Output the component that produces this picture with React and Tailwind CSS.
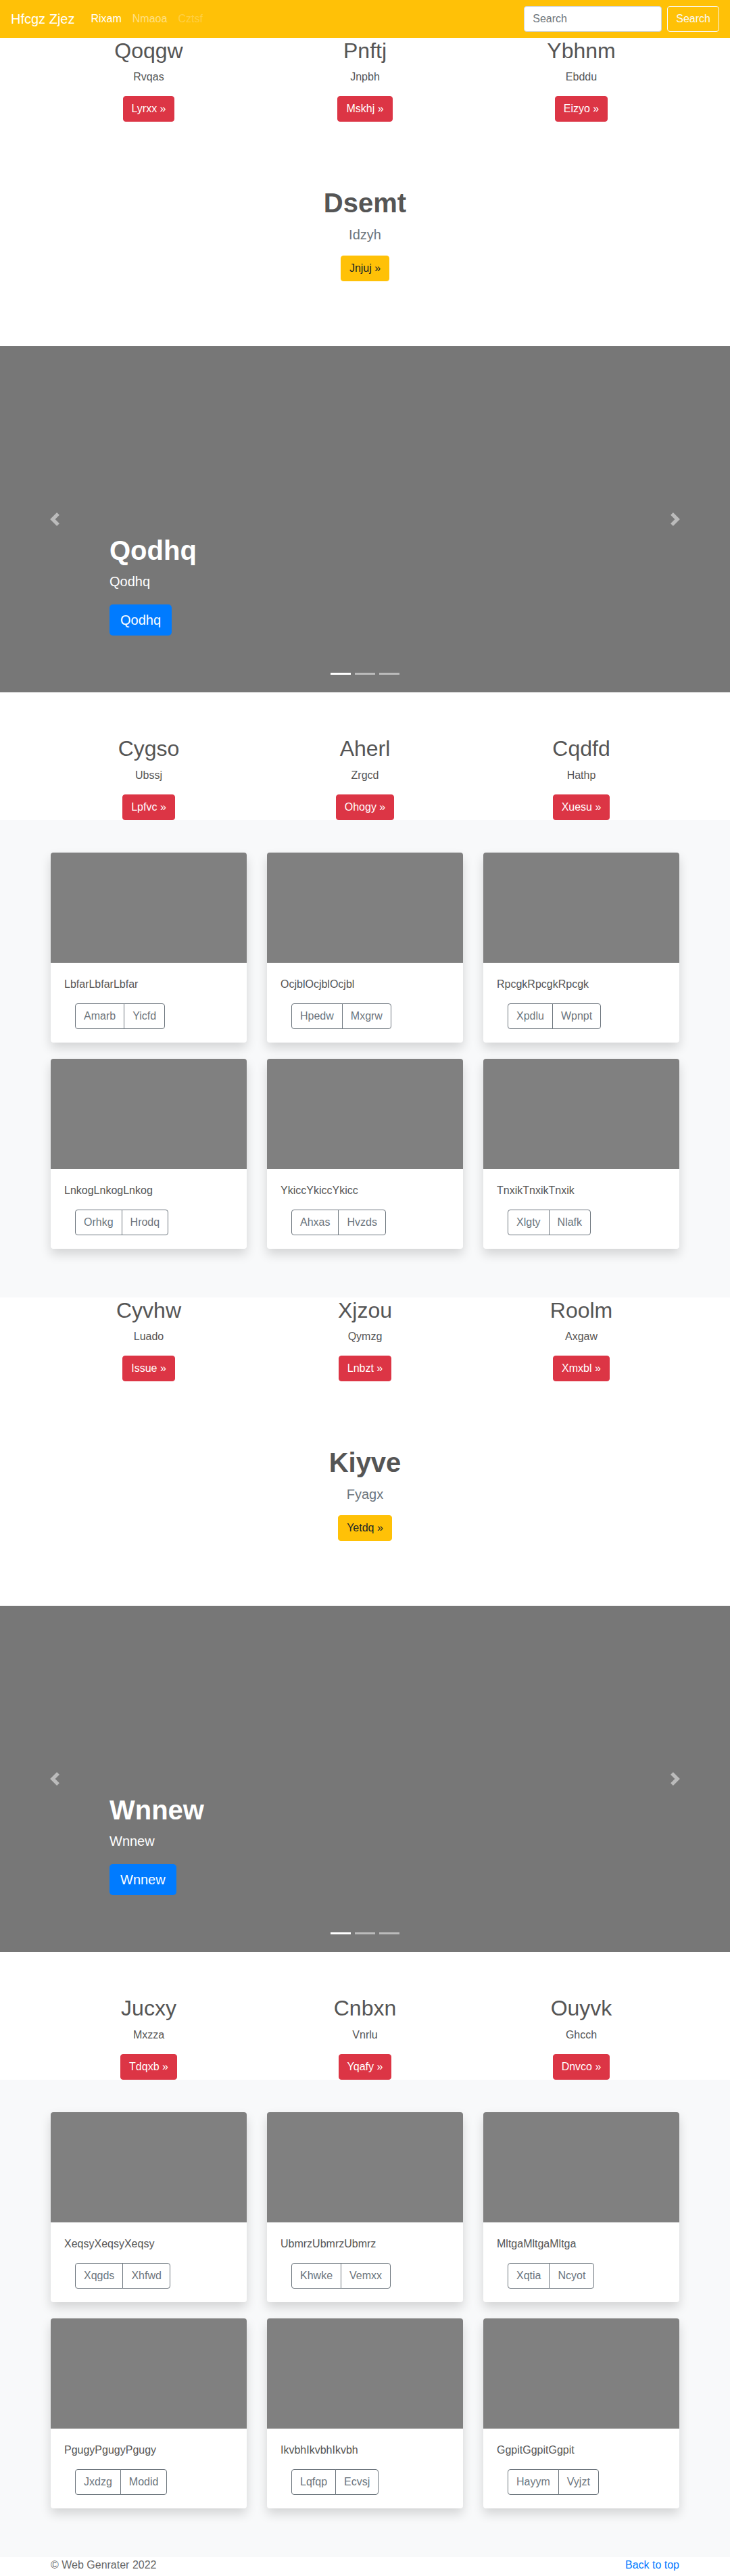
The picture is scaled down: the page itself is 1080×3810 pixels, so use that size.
import React from "react";

const FONT = { fontFamily: '"Segoe UI", "Liberation Sans", Arial, sans-serif' };

const ROW1 = [
  { title: "Qoqgw", sub: "Rvqas", btn: "Lyrxx" },
  { title: "Pnftj", sub: "Jnpbh", btn: "Mskhj" },
  { title: "Ybhnm", sub: "Ebddu", btn: "Eizyo" },
];
const ROW2 = [
  { title: "Cygso", sub: "Ubssj", btn: "Lpfvc" },
  { title: "Aherl", sub: "Zrgcd", btn: "Ohogy" },
  { title: "Cqdfd", sub: "Hathp", btn: "Xuesu" },
];
const ROW3 = [
  { title: "Cyvhw", sub: "Luado", btn: "Issue" },
  { title: "Xjzou", sub: "Qymzg", btn: "Lnbzt" },
  { title: "Roolm", sub: "Axgaw", btn: "Xmxbl" },
];
const ROW4 = [
  { title: "Jucxy", sub: "Mxzza", btn: "Tdqxb" },
  { title: "Cnbxn", sub: "Vnrlu", btn: "Yqafy" },
  { title: "Ouyvk", sub: "Ghcch", btn: "Dnvco" },
];

const ALBUM1 = [
  { text: "LbfarLbfarLbfar", a: "Amarb", b: "Yicfd" },
  { text: "OcjblOcjblOcjbl", a: "Hpedw", b: "Mxgrw" },
  { text: "RpcgkRpcgkRpcgk", a: "Xpdlu", b: "Wpnpt" },
  { text: "LnkogLnkogLnkog", a: "Orhkg", b: "Hrodq" },
  { text: "YkiccYkiccYkicc", a: "Ahxas", b: "Hvzds" },
  { text: "TnxikTnxikTnxik", a: "Xlgty", b: "Nlafk" },
];
const ALBUM2 = [
  { text: "XeqsyXeqsyXeqsy", a: "Xqgds", b: "Xhfwd" },
  { text: "UbmrzUbmrzUbmrz", a: "Khwke", b: "Vemxx" },
  { text: "MltgaMltgaMltga", a: "Xqtia", b: "Ncyot" },
  { text: "PgugyPgugyPgugy", a: "Jxdzg", b: "Modid" },
  { text: "IkvbhIkvbhIkvbh", a: "Lqfqp", b: "Ecvsj" },
  { text: "GgpitGgpitGgpit", a: "Hayym", b: "Vyjzt" },
];

const Navbar = () => (
  <nav className="flex items-center justify-between bg-[#ffc107] px-4 py-2 h-[56px]">
    <div className="flex items-center">
      <a className="mr-4 py-[5px] text-[20px] leading-[30px] text-white">Hfcgz Zjez</a>
      <ul className="flex">
        <li className="px-2 py-2 text-white">Rixam</li>
        <li className="px-2 py-2 text-white/50">Nmaoa</li>
        <li className="px-2 py-2 text-white/25">Cztsf</li>
      </ul>
    </div>
    <form className="flex items-center">
      <input
        placeholder="Search"
        className="mr-2 h-[38px] w-[204px] rounded border border-[#ced4da] bg-white px-3 text-base text-[#495057] placeholder:text-[#6c757d] outline-none"
      />
      <button type="button" className="h-[38px] rounded border border-[#f8f9fa] px-3 text-base text-[#f8f9fa]">
        Search
      </button>
    </form>
  </nav>
);

const Columns = ({ items }) => (
  <div className="mx-auto grid w-[960px] grid-cols-3 text-center">
    {items.map((it) => (
      <div key={it.title} className="px-[15px]">
        <h2 className="mb-2 text-[32px] font-normal leading-[1.2] text-[#555]">{it.title}</h2>
        <p className="mb-4 text-base leading-6 text-[#555]">{it.sub}</p>
        <a className="inline-block rounded bg-[#dc3545] px-3 py-[6px] text-base leading-6 text-white border border-[#dc3545]">
          {it.btn} &raquo;
        </a>
      </div>
    ))}
  </div>
);

const Jumbo = ({ title, lead, btn }) => (
  <section className="py-24 text-center">
    <h1 className="mb-2 text-[40px] font-semibold leading-[1.2] text-[#555]">{title}</h1>
    <p className="mb-4 text-[20px] font-light leading-[30px] text-[#6c757d]">{lead}</p>
    <a className="inline-block rounded border border-[#ffc107] bg-[#ffc107] px-3 py-[6px] text-base leading-6 text-[#212529]">
      {btn} &raquo;
    </a>
  </section>
);

const Carousel = ({ label }) => (
  <div className="relative mb-16 h-[512px] bg-[#777]">
    <div className="absolute left-[15%] right-[15%] bottom-12 py-5 text-left text-white">
      <h1 className="mb-2 text-[40px] font-semibold leading-[1.2]">{label}</h1>
      <p className="mb-5 text-[20px] leading-[28px]">{label}</p>
      <p className="mb-4">
        <a className="inline-block rounded-[5px] bg-[#007bff] px-4 py-2 text-[20px] leading-[30px] text-white">
          {label}
        </a>
      </p>
    </div>
    <div className="absolute left-0 top-0 bottom-0 flex w-[15%] items-center justify-center opacity-50">
      <svg width="20" height="20" viewBox="0 0 8 8" fill="#fff">
        <path d="M5.25 0l-4 4 4 4 1.5-1.5L4.25 4l2.5-2.5L5.25 0z" />
      </svg>
    </div>
    <div className="absolute right-0 top-0 bottom-0 flex w-[15%] items-center justify-center opacity-50">
      <svg width="20" height="20" viewBox="0 0 8 8" fill="#fff">
        <path d="M2.75 0l-1.5 1.5L3.75 4l-2.5 2.5L2.75 8l4-4-4-4z" />
      </svg>
    </div>
    <div className="absolute bottom-0 left-[15%] right-[15%] mb-4 flex justify-center">
      <span className="mx-[3px] my-[10px] h-[3px] w-[30px] bg-white" />
      <span className="mx-[3px] my-[10px] h-[3px] w-[30px] bg-white/50" />
      <span className="mx-[3px] my-[10px] h-[3px] w-[30px] bg-white/50" />
    </div>
  </div>
);

const Album = ({ cards }) => (
  <div className="bg-[#f8f9fa] py-12">
    <div className="mx-auto grid w-[960px] grid-cols-3 gap-x-[30px] px-[15px]">
      {cards.map((c) => (
        <div key={c.text} className="mb-6 overflow-hidden rounded bg-white shadow-[0_8px_16px_rgba(0,0,0,0.15)]">
          <div className="h-[163px] bg-[#808080]" />
          <div className="p-5">
            <p className="mb-4 text-base leading-6 text-[#555]">{c.text}</p>
            <div className="ml-4 inline-flex">
              <button type="button" className="rounded-l border border-[#6c757d] px-3 py-[6px] text-base leading-6 text-[#6c757d]">
                {c.a}
              </button>
              <button type="button" className="-ml-px rounded-r border border-[#6c757d] px-3 py-[6px] text-base leading-6 text-[#6c757d]">
                {c.b}
              </button>
            </div>
          </div>
        </div>
      ))}
    </div>
  </div>
);

export default function App() {
  return (
    <div style={FONT} className="bg-white text-base text-[#212529]">
      <Navbar />
      <Columns items={ROW1} />
      <Jumbo title="Dsemt" lead="Idzyh" btn="Jnjuj" />
      <Carousel label="Qodhq" />
      <Columns items={ROW2} />
      <Album cards={ALBUM1} />
      <Columns items={ROW3} />
      <Jumbo title="Kiyve" lead="Fyagx" btn="Yetdq" />
      <Carousel label="Wnnew" />
      <Columns items={ROW4} />
      <Album cards={ALBUM2} />
      <footer className="mx-auto flex w-[960px] justify-between px-[15px] leading-6">
        <p className="text-[#666]">&copy; Web Genrater 2022</p>
        <a className="text-[#007bff]">Back to top</a>
      </footer>
    </div>
  );
}
